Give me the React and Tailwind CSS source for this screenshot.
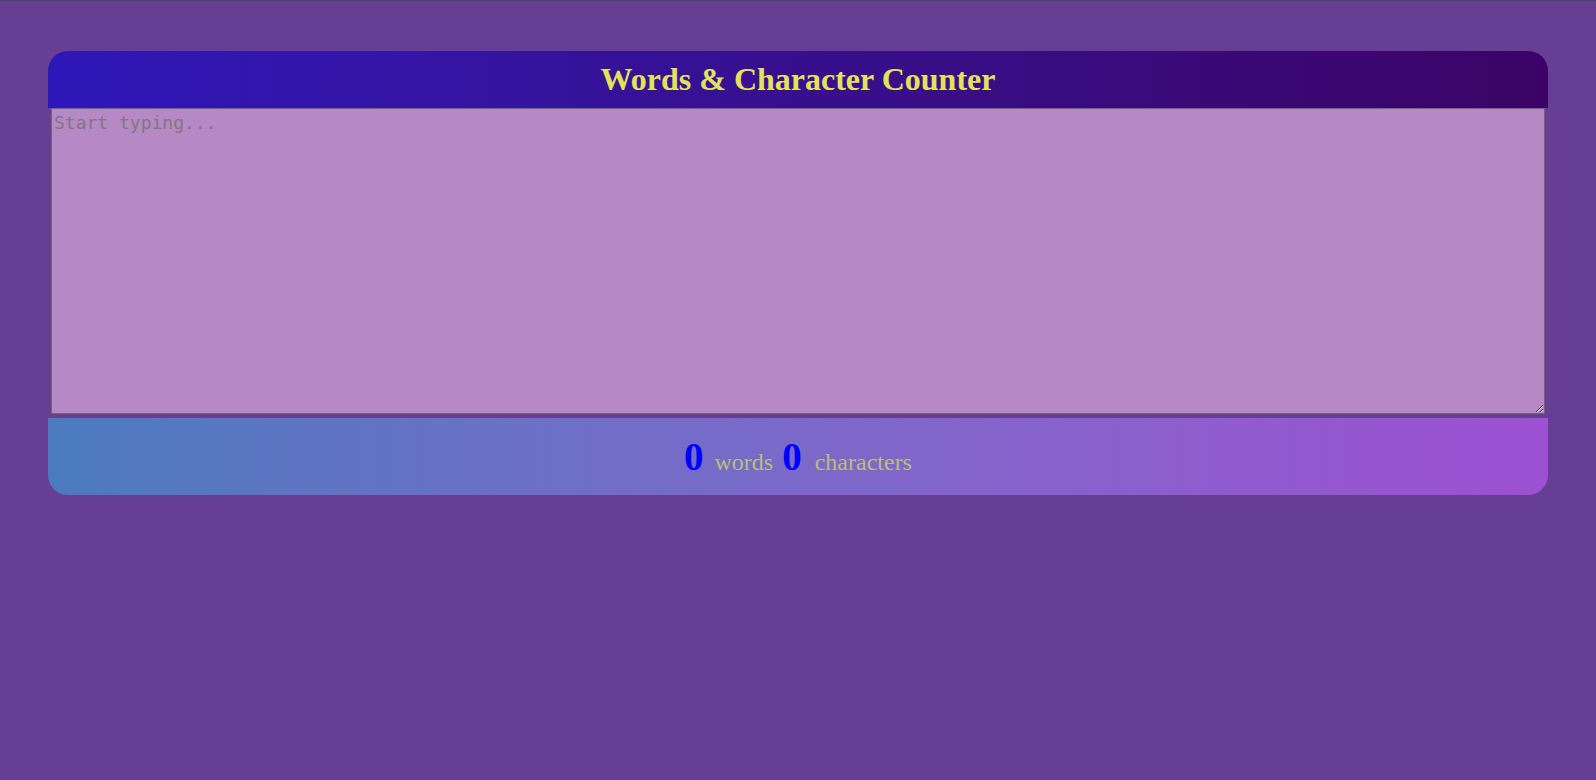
import { useState } from 'react';

const App = () => {
  const [text, setText] = useState('');

  const words = text.trim() ? text.trim().split(/\s+/).length : 0;
  const chars = text.length;

  return (
    <div className="min-h-screen bg-[#663e94] border-t border-[#4b4358] pt-[50px]">
      <div className="w-[1500px] mx-auto">
        {/* Title bar */}
        <div className="h-[57px] rounded-t-[20px] bg-linear-to-r from-[#2e17b9] to-[#3b0366] flex items-center justify-center pb-[2px]">
          <h1 className="font-['Liberation_Serif',serif] font-bold text-[32px] text-[#e2e35b] leading-none">
            Words &amp; Character Counter
          </h1>
        </div>

        <textarea
          value={text}
          onChange={e => setText(e.target.value)}
          placeholder="Start typing..."
          className="block w-[1494px] h-[306px] mx-auto mb-[4px] bg-[#b689c5] border border-[#6e6676] px-[2px] pt-[2px] font-['DejaVu_Sans_Mono',monospace] text-[18px] leading-[24px] text-[#2a2030] placeholder:text-[#7f7782] outline-none"
        />

        {/* Counter bar */}
        <div className="h-[77px] rounded-b-[20px] bg-linear-to-r from-[#4a7bbf] to-[#9d50d3] flex items-baseline justify-center pt-[19px] font-['Liberation_Serif',serif]">
          <span className="text-[39px] font-bold text-[#0000ff] leading-none">{words}</span>
          <span className="text-[24px] text-[#b7bf7d] ml-[11px] mr-[9px] leading-none">words</span>
          <span className="text-[39px] font-bold text-[#0000ff] leading-none">{chars}</span>
          <span className="text-[24px] text-[#b7bf7d] ml-[13px] leading-none">characters</span>
        </div>
      </div>
    </div>
  );
};

export default App;
